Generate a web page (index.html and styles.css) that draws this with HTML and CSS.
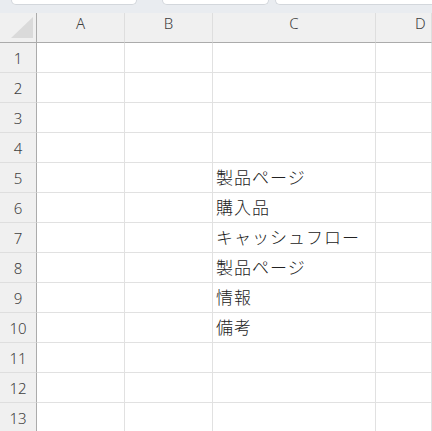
FILE: index.html
```html
<!DOCTYPE html>
<html lang="ja">
<head>
<meta charset="utf-8">
<link rel="stylesheet" href="styles.css">
</head>
<body>
<div class="tabs">
  <div class="tab tab1"></div>
  <div class="tab tab2"></div>
  <div class="tab tab3"></div>
</div>
<div class="sheet">
  <div class="hd corner"><svg class="tri" width="22" height="21" viewBox="0 0 22 21"><polygon points="22,0 22,21 0,21" fill="#dadada"/></svg></div>
  <div class="hd col">A</div>
  <div class="hd col">B</div>
  <div class="hd col">C</div>
  <div class="hd col cut">D</div>

  <div class="rh">1</div><div class="c"></div><div class="c"></div><div class="c"></div><div class="c"></div>
  <div class="rh">2</div><div class="c"></div><div class="c"></div><div class="c"></div><div class="c"></div>
  <div class="rh">3</div><div class="c"></div><div class="c"></div><div class="c"></div><div class="c"></div>
  <div class="rh">4</div><div class="c"></div><div class="c"></div><div class="c"></div><div class="c"></div>
  <div class="rh">5</div><div class="c"></div><div class="c"></div><div class="c t">製品ページ</div><div class="c"></div>
  <div class="rh">6</div><div class="c"></div><div class="c"></div><div class="c t">購入品</div><div class="c"></div>
  <div class="rh">7</div><div class="c"></div><div class="c"></div><div class="c t">キャッシュフロー</div><div class="c"></div>
  <div class="rh">8</div><div class="c"></div><div class="c"></div><div class="c t">製品ページ</div><div class="c"></div>
  <div class="rh">9</div><div class="c"></div><div class="c"></div><div class="c t">情報</div><div class="c"></div>
  <div class="rh">10</div><div class="c"></div><div class="c"></div><div class="c t">備考</div><div class="c"></div>
  <div class="rh">11</div><div class="c"></div><div class="c"></div><div class="c"></div><div class="c"></div>
  <div class="rh">12</div><div class="c"></div><div class="c"></div><div class="c"></div><div class="c"></div>
  <div class="rh">13</div><div class="c"></div><div class="c"></div><div class="c"></div><div class="c"></div>
</div>
</body>
</html>
```

FILE: styles.css
```css
html, body {
  margin: 0;
  padding: 0;
  background: #ffffff;
  overflow: hidden;
}
.tabs {
  height: 13px;
  background: #e9ecf0;
  display: flex;
  align-items: flex-start;
  width: 432px;
}
.tab {
  flex: none;
  background: #ffffff;
  border: 1px solid #d3d7dc;
  border-top: none;
  border-radius: 0 0 6px 6px;
  box-sizing: border-box;
  height: 5px;
}
.tab1 { margin-left: 11px; width: 126px; }
.tab2 { margin-left: 25px; width: 107px; }
.tab3 {
  margin-left: 6px;
  flex: 1 1 auto;
  border-right: none;
  border-radius: 0 0 0 6px;
}
.sheet {
  display: grid;
  grid-template-columns: 37px 88px 88px 163px 56px;
  grid-auto-rows: 30px;
  width: 432px;
  font-family: "Noto Sans", "Open Sans", sans-serif;
}
.sheet > div {
  box-sizing: border-box;
  border-right: 1px solid #e1e1e1;
  border-bottom: 1px solid #e1e1e1;
}
.hd {
  background: #f0f0f0;
  border-bottom-color: #ababab !important;
  border-right-color: #dedede !important;
  font-size: 15px;
  font-weight: 300;
  line-height: 20px;
  color: #404040;
  text-align: center;
}
.hd.cut {
  text-align: left;
  padding-left: 39px;
}
.corner {
  position: relative;
  border-right-color: #ababab !important;
}
.tri {
  position: absolute;
  left: 11px;
  top: 4px;
}
.rh {
  background: #f0f0f0;
  border-right-color: #ababab !important;
  border-bottom-color: #dedede !important;
  font-size: 15px;
  font-weight: 300;
  line-height: 29px;
  padding-top: 1px;
  color: #404040;
  text-align: center;
}
.t {
  font-family: "Noto Sans CJK JP", sans-serif;
  font-size: 17px;
  font-weight: 300;
  letter-spacing: 1px;
  line-height: 27px;
  padding-left: 3px;
  color: #222222;
  white-space: nowrap;
}
```
